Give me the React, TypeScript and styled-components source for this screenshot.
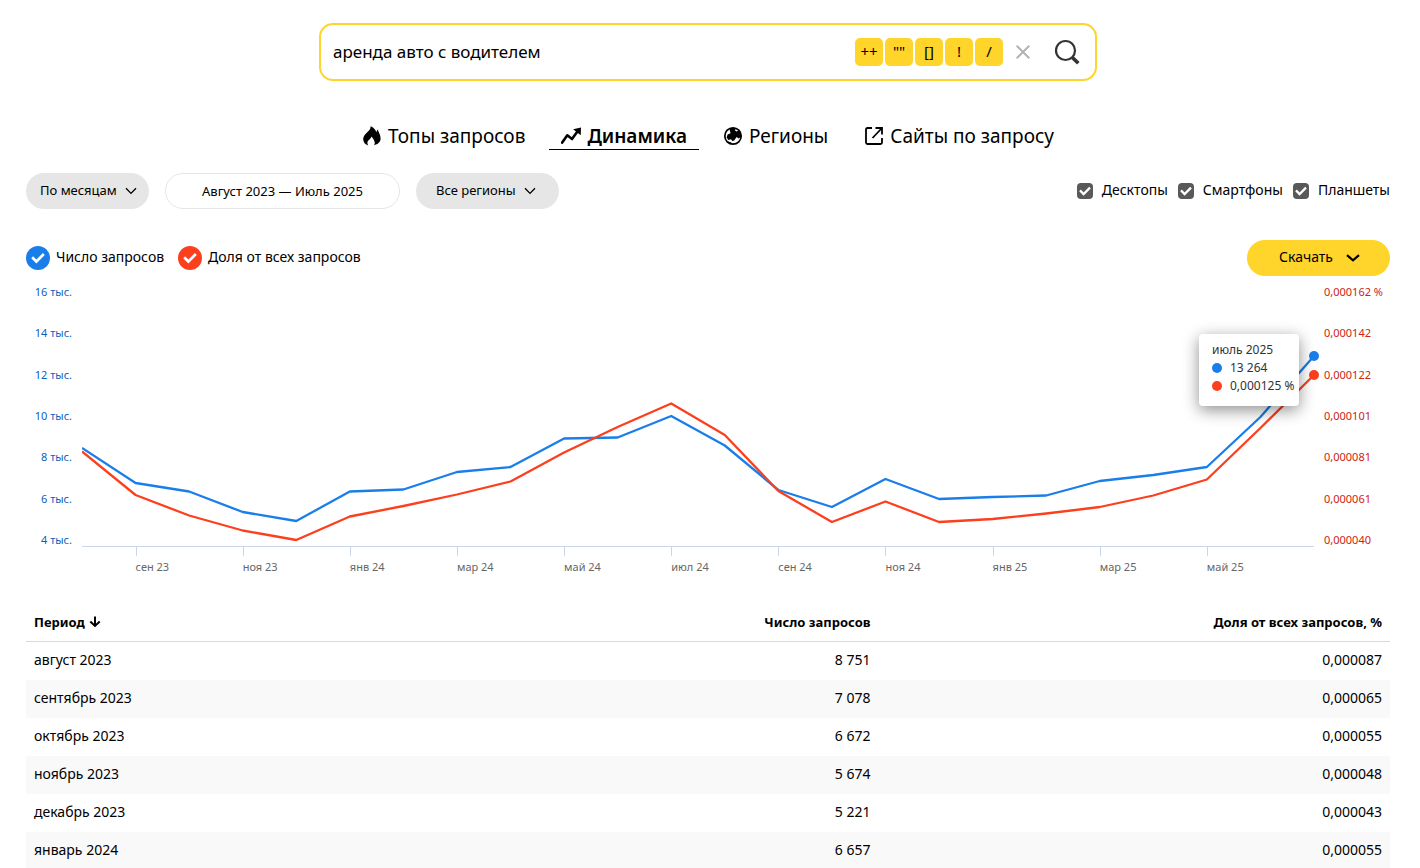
import React, { useState } from 'react';
import styled, { createGlobalStyle } from 'styled-components';

const color = {
  yellow: '#ffd42b',
  blue: '#1a7eea',
  red: '#fc3f1d',
  grey: '#e6e6e6',
  axis: '#ccd6eb',
};

const GlobalStyle = createGlobalStyle`
  *, *::before, *::after { box-sizing: border-box; }
  html { scrollbar-width: none; }
  body {
    margin: 0;
    background: #fff;
    color: #000;
    font: 400 14px/20px 'Noto Sans', 'Open Sans', sans-serif;
  }
  button, input, select { font: inherit; color: inherit; }
  button, select { cursor: pointer; }
`;

const Page = styled.div`
  padding: 23px 30px 0 26px;
`;

const SearchForm = styled.form`
  display: flex;
  align-items: center;
  width: 100%;
  max-width: 778px;
  height: 58px;
  margin: 0 auto;
  padding: 0 4px 0 12px;
  border: 2px solid ${color.yellow};
  border-radius: 14px;
`;

const SearchInput = styled.input`
  flex: 1;
  min-width: 0;
  height: 40px;
  padding: 0 0 2px;
  border: 0;
  outline: 0;
  background: none;
  font-size: 17px;
`;

const Operators = styled.div`
  display: flex;
  gap: 2px;
`;

const OperatorButton = styled.button`
  width: 28px;
  height: 28px;
  padding: 0 0 2px;
  border: 0;
  border-radius: 5px;
  background: ${color.yellow};
  font-size: 15px;
`;

const IconButton = styled.button<{ $size: number }>`
  display: grid;
  place-items: center;
  width: ${(p) => p.$size}px;
  height: 40px;
  padding: 0;
  border: 0;
  background: none;
`;

const Tabs = styled.nav`
  display: flex;
  flex-wrap: wrap;
  justify-content: center;
  gap: 0 12px;
  margin-top: 42px;
`;

const Tab = styled.a<{ $active?: boolean }>`
  display: flex;
  align-items: center;
  gap: 6px;
  height: 27px;
  padding: 0 12px;
  border-bottom: 1px solid ${(p) => (p.$active ? '#000' : 'transparent')};
  color: #000;
  font-size: 19px;
  font-weight: ${(p) => (p.$active ? 600 : 400)};
  text-decoration: none;
`;

const TabIcon = styled.svg`
  width: 20px;
  height: 20px;
  flex: none;
`;

const Toolbar = styled.div`
  display: flex;
  flex-wrap: wrap;
  align-items: center;
  justify-content: space-between;
  gap: 12px;
`;

const Filters = styled(Toolbar)`
  margin: 23px 0 31px;
`;

const Group = styled.div<{ $gap: number }>`
  display: flex;
  flex-wrap: wrap;
  align-items: center;
  gap: ${(p) => p.$gap}px;
`;

const SelectBox = styled.div<{ $inset: number }>`
  display: grid;
  align-items: center;

  > * { grid-area: 1 / 1; }
  > svg {
    justify-self: end;
    margin-right: ${(p) => p.$inset}px;
    pointer-events: none;
  }
`;

const Select = styled.select<{ $width: number; $inset: number }>`
  appearance: none;
  width: ${(p) => p.$width}px;
  height: 36px;
  padding: 0 0 2px ${(p) => p.$inset}px;
  border: 0;
  border-radius: 18px;
  background: ${color.grey};
  font-size: 13px;
`;

const DateButton = styled.button`
  width: 235px;
  height: 36px;
  padding: 0;
  border: 1px solid ${color.grey};
  border-radius: 18px;
  background: #fff;
  font-size: 13px;
`;

const CheckLabel = styled.label<{ $gap: number }>`
  display: flex;
  align-items: center;
  gap: ${(p) => p.$gap}px;
  cursor: pointer;
`;

const LabelText = styled.span`
  padding-bottom: 2px;
`;

const CheckMark = styled.span`
  display: grid;
  place-items: center;

  > * { grid-area: 1 / 1; }
  > svg { pointer-events: none; }
  > input:not(:checked) + svg { visibility: hidden; }
`;

const CheckInput = styled.input<{ $size: number; $radius: number; $color: string }>`
  appearance: none;
  width: ${(p) => p.$size}px;
  height: ${(p) => p.$size}px;
  margin: 0;
  border-radius: ${(p) => p.$radius}px;
  background: ${(p) => p.$color};
`;

const DownloadButton = styled.button`
  display: flex;
  align-items: center;
  justify-content: center;
  gap: 13px;
  width: 143px;
  height: 36px;
  padding: 0 0 0 2px;
  border: 0;
  border-radius: 18px;
  background: ${color.yellow};
`;

const Chart = styled.section`
  display: grid;
  grid-template-columns: 56px minmax(0, 1fr) 76px;
`;

const Axis = styled.div<{ $color: string; $align: 'left' | 'right' }>`
  display: flex;
  flex-direction: column;
  justify-content: space-between;
  height: 270px;
  padding: ${(p) => (p.$align === 'right' ? '10px 10px 0 0' : '10px 0 0 10px')};
  color: ${(p) => p.$color};
  font-size: 11px;
  line-height: 12px;
  text-align: ${(p) => p.$align};
  white-space: nowrap;
`;

const Plot = styled.div`
  position: relative;
`;

const Lines = styled.svg`
  display: block;
  width: 100%;
  height: 270px;
  overflow: visible;
`;

const Months = styled.div`
  display: grid;
  grid-template-columns: repeat(23, minmax(0, 1fr));
  border-top: 1px solid ${color.axis};
`;

const Month = styled.span<{ $start: number }>`
  grid-column: ${(p) => p.$start} / span 2;
  grid-row: 1;
  color: #666;
  font-size: 11px;
  line-height: 16px;
  white-space: nowrap;

  &::before {
    content: '';
    display: block;
    width: 1px;
    height: 9px;
    margin-bottom: 3px;
    background: ${color.axis};
  }
`;

const Tooltip = styled.div`
  position: absolute;
  top: 58px;
  right: 15px;
  width: 100px;
  padding: 7px 0 11px 13px;
  border-radius: 4px;
  background: #fff;
  box-shadow: 0 4px 16px rgba(0, 0, 0, 0.45);
  color: #333;
  font-size: 12px;
  line-height: 18px;
  white-space: nowrap;
`;

const TooltipRow = styled.div<{ $color: string }>`
  display: flex;
  align-items: center;
  gap: 8px;

  &::before {
    content: '';
    width: 10px;
    height: 10px;
    border-radius: 5px;
    background: ${(p) => p.$color};
  }
`;

const Table = styled.table`
  width: 100%;
  margin-top: 28px;
  border-collapse: separate;
  border-spacing: 0;
  table-layout: fixed;
`;

const HeadCell = styled.th<{ $width?: string }>`
  width: ${(p) => p.$width};
  height: 39px;
  padding: 0 8px;
  border-bottom: 1px solid #d9d9d9;
  font-size: 13px;
  font-weight: 700;
  text-align: right;

  &:first-child { text-align: left; }
`;

const SortButton = styled.button`
  display: flex;
  align-items: center;
  gap: 4px;
  padding: 0;
  border: 0;
  background: none;
`;

const Row = styled.tr`
  &:nth-child(even) { background: #f9f9f9; }
`;

const Cell = styled.td`
  height: 38px;
  padding: 0 8px 2px;
  text-align: right;

  &:first-child { text-align: left; }
`;

const Chevron = ({ width = 12, stroke = 1.3 }: { width?: number; stroke?: number }) => (
  <svg width={width} height="8" viewBox={`0 0 ${width} 8`} fill="none" stroke="currentColor" strokeWidth={stroke}>
    <path d={`M1 1.2 L${width / 2} 6.4 L${width - 1} 1.2`} />
  </svg>
);

const Tick = ({ size }: { size: number }) => (
  <svg width={size} height={size} viewBox="0 0 12 12" fill="none" stroke="#fff" strokeWidth="2.3">
    <path d="M1 5.400L4.600 9L11 2.600" />
  </svg>
);

const FireIcon = () => (
  <TabIcon viewBox="0 0 20 20">
    <path d="M8.6 0.3C9 3 6.6 5 4.3 7.2C2.5 9 1.200 10.800 1.200 13.200C1.200 16.200 3.200 18.500 6.200 19.400C5.700 18.700 5.400 17.900 5.400 17C5.400 14.300 8.200 13.400 9.600 10.400C10.400 12 12.800 14 12.800 16.700C12.800 17.800 12.500 18.600 12 19.300C15.800 18.500 18.600 16.100 18.600 12.600C18.600 9 16.600 6.800 15.800 3.600C15 4.300 14.600 5.200 14.400 6.200C13.400 3.600 11.600 1.600 8.600 0.300Z" />
  </TabIcon>
);

const TrendIcon = () => (
  <TabIcon viewBox="0 0 20 20">
    <path d="M1.200 16.600L6.300 9.300L11 13L16.600 5.200" fill="none" stroke="#000" strokeWidth="2.600" strokeLinejoin="round" strokeLinecap="round" />
    <path d="M12.200 3.200L20 1.400L19.700 9.200Z" />
  </TabIcon>
);

const GlobeIcon = () => (
  <TabIcon viewBox="0 0 20 20">
    <circle cx="10" cy="10" r="8.200" fill="#fff" stroke="#000" strokeWidth="1.700" />
    <path d="M6.500 2.600C8.500 1.500 11 1.300 13.200 2.300L11.800 4.200L13.600 5.600L15.800 4.200C17.600 6 18.500 8.400 18.200 10.800L15.600 12.600L13.600 11L11.400 14.200L9.600 15.200L8 13.200L5.400 14L3.600 11.400L4.600 8.400L7.600 7.200L7 5.200Z" />
    <path d="M5.500 15.600L8.200 16.400L9.600 18.200C7.600 18.200 6 17.400 4.700 16.200Z" />
  </TabIcon>
);

const ExternalIcon = () => (
  <TabIcon viewBox="0 0 20 20" fill="none" stroke="#000" strokeWidth="1.800">
    <path d="M8 2H3.500Q2 2 2 3.500V16.500Q2 18 3.500 18H16.500Q18 18 18 16.500V12" />
    <path d="M11.500 2H18V8.500M18 2L8.500 12" />
  </TabIcon>
);

const blueY = [172, 207, 215.5, 236, 245, 215.5, 213.5, 196, 191, 162.5, 161.5, 140, 169.5, 214, 231, 203, 223, 221, 219.5, 205, 199, 191, 141, 80];
const redY = [175.5, 219, 239.5, 254.5, 264, 240.5, 230, 218.5, 205.5, 176.5, 151, 127.5, 159, 215, 246, 225.5, 246, 243, 237.5, 231, 219.5, 203.5, 152, 99];

const Series = ({ ys, stroke }: { ys: number[]; stroke: string }) => (
  <>
    <svg width="100%" height="270" viewBox="0 0 23 270" preserveAspectRatio="none">
      <polyline
        points={ys.map((y, i) => `${i},${y}`).join(' ')}
        fill="none"
        stroke={stroke}
        strokeWidth="2.3"
        strokeLinejoin="round"
        vectorEffect="non-scaling-stroke"
      />
    </svg>
    <circle cx="100%" cy={ys[ys.length - 1]} r="5" fill={stroke} />
  </>
);

const counts = ['16 тыс.', '14 тыс.', '12 тыс.', '10 тыс.', '8 тыс.', '6 тыс.', '4 тыс.'];
const shares = ['0,000162 %', '0,000142', '0,000122', '0,000101', '0,000081', '0,000061', '0,000040'];
const months = ['сен 23', 'ноя 23', 'янв 24', 'мар 24', 'май 24', 'июл 24', 'сен 24', 'ноя 24', 'янв 25', 'мар 25', 'май 25'];
const rows = [
  ['август 2023', '8 751', '0,000087'],
  ['сентябрь 2023', '7 078', '0,000065'],
  ['октябрь 2023', '6 672', '0,000055'],
  ['ноябрь 2023', '5 674', '0,000048'],
  ['декабрь 2023', '5 221', '0,000043'],
  ['январь 2024', '6 657', '0,000055'],
];

export default function App() {
  const [query, setQuery] = useState('аренда авто с водителем');

  return (
    <>
      <GlobalStyle />
      <Page>
        <SearchForm role="search" onSubmit={(e) => e.preventDefault()}>
          <SearchInput aria-label="Запрос" value={query} onChange={(e) => setQuery(e.target.value)} />
          <Operators>
            {['++', '""', '[]', '!', '/'].map((op) => (
              <OperatorButton key={op} type="button">{op}</OperatorButton>
            ))}
          </Operators>
          <IconButton type="button" aria-label="Очистить" $size={40} onClick={() => setQuery('')}>
            <svg width="14" height="14" viewBox="0 0 14 14" stroke="#b3b3b3" strokeWidth="2">
              <path d="M0.700 0.700L13.300 13.300M13.300 0.700L0.700 13.300" />
            </svg>
          </IconButton>
          <IconButton type="submit" aria-label="Найти" $size={48}>
            <svg width="26" height="26" viewBox="0 0 26 26" fill="none" stroke="#333">
              <circle cx="11.500" cy="11.500" r="9.500" strokeWidth="2.200" />
              <path d="M18.400 18.400L24.300 24.300" strokeWidth="3.600" />
            </svg>
          </IconButton>
        </SearchForm>

        <Tabs>
          <Tab href="#top"><FireIcon />Топы запросов</Tab>
          <Tab href="#dynamics" $active aria-current="page"><TrendIcon />Динамика</Tab>
          <Tab href="#regions"><GlobeIcon />Регионы</Tab>
          <Tab href="#sites"><ExternalIcon />Сайты по запросу</Tab>
        </Tabs>

        <Filters>
          <Group $gap={16}>
            <SelectBox $inset={12}>
              <Select aria-label="Период" $width={123} $inset={14}>
                <option>По месяцам</option>
              </Select>
              <Chevron />
            </SelectBox>
            <DateButton type="button">Август 2023 — Июль 2025</DateButton>
            <SelectBox $inset={23}>
              <Select aria-label="Регион" $width={143} $inset={20}>
                <option>Все регионы</option>
              </Select>
              <Chevron />
            </SelectBox>
          </Group>
          <Group $gap={10}>
            {['Десктопы', 'Смартфоны', 'Планшеты'].map((name) => (
              <CheckLabel key={name} $gap={9}>
                <CheckMark>
                  <CheckInput type="checkbox" defaultChecked $size={16} $radius={4} $color="#595959" />
                  <Tick size={12} />
                </CheckMark>
                <LabelText>{name}</LabelText>
              </CheckLabel>
            ))}
          </Group>
        </Filters>

        <Toolbar>
          <Group $gap={14}>
            {[['Число запросов', color.blue], ['Доля от всех запросов', color.red]].map(([name, fill]) => (
              <CheckLabel key={name} $gap={6}>
                <CheckMark>
                  <CheckInput type="checkbox" defaultChecked $size={24} $radius={12} $color={fill} />
                  <Tick size={14} />
                </CheckMark>
                <LabelText>{name}</LabelText>
              </CheckLabel>
            ))}
          </Group>
          <DownloadButton type="button">
            <LabelText>Скачать</LabelText>
            <Chevron width={14} stroke={2.2} />
          </DownloadButton>
        </Toolbar>

        <Chart>
          <Axis $color="#0a5fbe" $align="right">
            {counts.map((c) => <span key={c}>{c}</span>)}
          </Axis>
          <Plot>
            <Lines role="img" aria-label="Динамика запросов">
              <Series ys={blueY} stroke={color.blue} />
              <Series ys={redY} stroke={color.red} />
            </Lines>
            <Months>
              {months.map((m, i) => <Month key={m} $start={i * 2 + 2}>{m}</Month>)}
            </Months>
            <Tooltip role="tooltip">
              июль 2025
              <TooltipRow $color={color.blue}>13 264</TooltipRow>
              <TooltipRow $color={color.red}>0,000125 %</TooltipRow>
            </Tooltip>
          </Plot>
          <Axis $color="#cf2311" $align="left">
            {shares.map((s) => <span key={s}>{s}</span>)}
          </Axis>
        </Chart>

        <Table>
          <thead>
            <tr>
              <HeadCell scope="col" $width="33%">
                <SortButton type="button">
                  Период
                  <svg width="12" height="12" viewBox="0 0 12 12" fill="none" stroke="#000" strokeWidth="2">
                    <path d="M6 0.500V10M1.300 5.600L6 10L10.700 5.600" />
                  </svg>
                </SortButton>
              </HeadCell>
              <HeadCell scope="col" $width="29.5%">Число запросов</HeadCell>
              <HeadCell scope="col">Доля от всех запросов, %</HeadCell>
            </tr>
          </thead>
          <tbody>
            {rows.map((cells) => (
              <Row key={cells[0]}>
                {cells.map((c, i) => <Cell key={i}>{c}</Cell>)}
              </Row>
            ))}
          </tbody>
        </Table>
      </Page>
    </>
  );
}
